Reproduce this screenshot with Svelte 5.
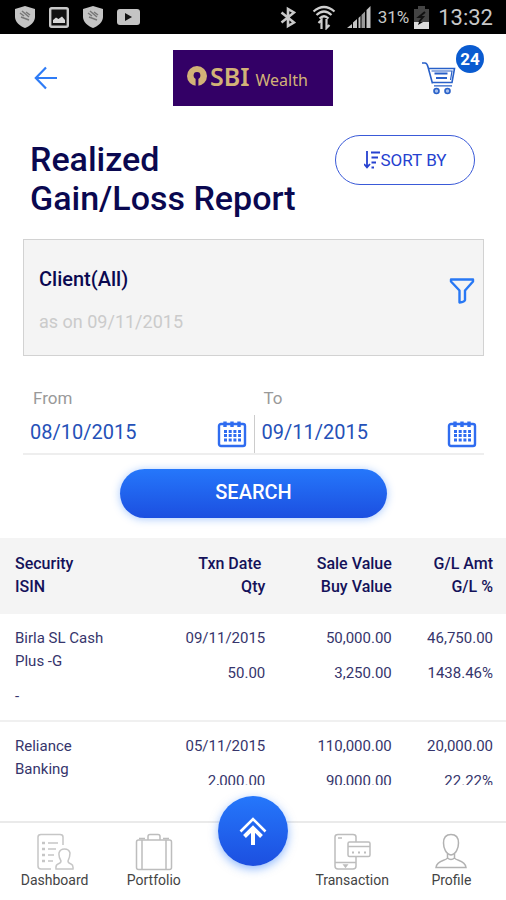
<script>
	let client = $state('Client(All)');
	let asOn = $state('09/11/2015');
	let fromDate = $state('08/10/2015');
	let toDate = $state('09/11/2015');
	let cartCount = $state(24);

	const rows = [
		{
			security: 'Birla SL Cash Plus -G',
			isin: '-',
			date: '09/11/2015',
			qty: '50.00',
			sale: '50,000.00',
			buy: '3,250.00',
			amount: '46,750.00',
			percent: '1438.46%'
		},
		{
			security: 'Reliance Banking',
			isin: '-',
			date: '05/11/2015',
			qty: '2,000.00',
			sale: '110,000.00',
			buy: '90,000.00',
			amount: '20,000.00',
			percent: '22.22%'
		}
	];
</script>

{#snippet shield()}
	<svg width="22" height="24" viewBox="0 0 22 24">
		<path d="M11 1 L21 4 V12 C21 17 16 21 11 23 C6 21 1 17 1 12 V4 Z" fill="#c4c4c4" />
		<path d="M6 8 L10 11 M8 6 L15 12 M12 7 L16 10 M7 12 L15 15" stroke="#777" stroke-width="1.5" fill="none" />
	</svg>
{/snippet}

{#snippet calendar()}
	<svg width="30" height="28" viewBox="0 0 30 28" fill="none" stroke="#2f6cf0">
		<rect x="2" y="4" width="26" height="22" rx="2" stroke-width="2.4" />
		<path d="M8 1.5 V7 M15 1.5 V7 M22 1.5 V7" stroke-width="3.4" />
		<path d="M7 11.5 H24 M7 15.5 H24 M7 20 H24" stroke-width="3" stroke-dasharray="3 1.7" />
	</svg>
{/snippet}

<div class="app">
	<div class="status">
		<div class="status-left">
			{@render shield()}
			<svg width="20" height="21" viewBox="0 0 20 21">
				<rect x="1.2" y="1.2" width="17.6" height="18.6" rx="1.5" fill="#111" stroke="#c8c8c8" stroke-width="2.4" />
				<path d="M4 16 V13 L7 10.5 L9.5 12 L13 9.5 L16 13 V16 Z" fill="#d8d8d8" />
			</svg>
			{@render shield()}
			<svg width="23" height="16" viewBox="0 0 23 16">
				<rect width="23" height="16" rx="3" fill="#c4c4c4" />
				<path d="M8 4 L15 8 L8 12 Z" fill="#111" />
			</svg>
		</div>
		<div class="status-right">
			<svg width="16" height="23" viewBox="0 0 16 23" fill="none" stroke="#c8c8c8" stroke-width="2.6">
				<path d="M1.5 6.5 L14 16.500 L8 20 V3 L14 6.500 L1.5 16.500" />
			</svg>
			<svg class="wifi" width="24" height="25" viewBox="0 0 24 25" fill="none" stroke="#cfcfcf" stroke-width="2.2">
				<path d="M1.5 6.5 Q12 -2.5 22.5 6.5" />
				<path d="M4.5 10 Q12 3 19.5 10" />
				<path d="M7.5 13.5 Q12 9 16.5 13.5" />
				<path d="M9.5 24 V15 L6.5 18 M14.5 14 V23 L17.5 20" />
			</svg>
			<svg class="signal" width="24" height="22" viewBox="0 0 24 22" fill="#c4c4c4">
				<path d="M0 22 L5 18 V22 Z M6 22 V16.5 L10 13 V22 Z M11.5 22 V12 L13.5 10 V22 Z" />
				<path d="M14.5 22 V9 L18 5.5 V22 Z" fill="#999" />
				<path d="M19.5 22 V4 L23.5 0 V22 Z" />
			</svg>
			<span class="battery">31%</span>
			<svg width="15" height="23" viewBox="0 0 15 23">
				<path d="M0 3 H4 V0 H11 V3 H15 V16 H0 Z" fill="#444" />
				<path d="M0 16 H5 L4 19 L9 16 H15 V23 H0 Z" fill="#ddd" />
				<path d="M11 6 L5 11 H9 L5 16" stroke="#111" stroke-width="2" fill="none" />
			</svg>
			<span class="clock">13:32</span>
		</div>
	</div>

	<header>
		<button class="icon-button back" aria-label="Back">
			<svg width="24" height="24" viewBox="0 0 24 24" fill="none" stroke="#2f7cf6" stroke-width="2.2">
				<path d="M23 12 H2 M12 1.5 L1.8 12 L12 22.5" />
			</svg>
		</button>
		<div class="logo">
			<svg width="20" height="22" viewBox="0 0 20 22">
				<circle cx="10" cy="11" r="10" fill="#d2b277" />
				<circle cx="10" cy="10.5" r="3.4" fill="#330066" />
				<rect x="8.6" y="11" width="2.8" height="11" fill="#330066" />
			</svg>
			<strong>SBI</strong>
			<span>Wealth</span>
		</div>
		<button class="icon-button cart" aria-label="Cart">
			<svg width="36" height="34" viewBox="0 0 36 34" fill="none" stroke="#2860c8" stroke-width="1.6">
				<path d="M1 2 H4 Q6 2 7 6 L11.5 22.5 M7 7.5 H33.5 L31 21.5 H11" />
				<path d="M10.5 10 H31 L29.5 19 M13 24.8 H31" stroke-width="1.2" />
				<path d="M13.5 12.5 H26.5 M15 17 H26" stroke-width="1.8" />
				<circle cx="15.5" cy="30" r="2.5" fill="#a8c0ec" />
				<circle cx="26.5" cy="30" r="2.5" fill="#a8c0ec" />
			</svg>
			<span class="badge">{cartCount}</span>
		</button>
	</header>

	<div class="title-row">
		<h1>Realized<br />Gain/Loss Report</h1>
		<button class="sort">
			<svg width="17" height="18" viewBox="0 0 17 18" fill="none" stroke="#2541d0" stroke-width="1.8">
				<path d="M3 0 V16 M0 13 L3 16.3 L6 13" />
				<path d="M7 1.5 H16 M7.5 6.5 H14 M7.5 11.5 H12 M7.5 16.5 H10" stroke-width="2" />
			</svg>SORT BY
		</button>
	</div>

	<section class="client">
		<div>
			<h2>{client}</h2>
			<p>as on {asOn}</p>
		</div>
		<button class="icon-button" aria-label="Filter">
			<svg width="26" height="28" viewBox="0 0 26 28" fill="none" stroke="#2878f4" stroke-width="2.4" stroke-linejoin="round">
				<path d="M2 2.5 H24 V4.5 L16 13.5 V23 Q15.5 25 10.5 25.5 V13.5 L2 4.5 Z" />
			</svg>
		</button>
	</section>

	<form onsubmit={(e) => e.preventDefault()}>
		<div class="dates">
			<div class="field">
				<label for="from">From</label>
				<div class="control">
					<input id="from" type="text" bind:value={fromDate} />
					<button type="button" class="icon-button" aria-label="Pick from date">{@render calendar()}</button>
				</div>
			</div>
			<div class="field">
				<label for="to">To</label>
				<div class="control">
					<input id="to" type="text" bind:value={toDate} />
					<button type="button" class="icon-button" aria-label="Pick to date">{@render calendar()}</button>
				</div>
			</div>
		</div>
		<button class="search">SEARCH</button>
	</form>

	<div class="list">
		<table>
			<thead>
				<tr>
					<th class="name">Security<br />ISIN</th>
					<th class="date">Txn Date&nbsp;<br />Qty</th>
					<th class="value">Sale Value<br />Buy Value</th>
					<th>G/L Amt<br />G/L %</th>
				</tr>
			</thead>
			<tbody>
				{#each rows as row}
					<tr>
						<td class="name"><div>{row.security}</div><div>{row.isin}</div></td>
						<td><div>{row.date}</div><div>{row.qty}</div></td>
						<td><div>{row.sale}</div><div>{row.buy}</div></td>
						<td><div>{row.amount}</div><div>{row.percent}</div></td>
					</tr>
				{/each}
			</tbody>
		</table>
	</div>

	<nav>
		<a href="#dashboard">
			<svg width="38" height="38" viewBox="0 0 38 38" fill="none" stroke="#c6c6c6" stroke-width="1.5">
				<path d="M15 36 H5 Q2 36 2 33 V4 Q2 1.5 5 1.5 H24 Q27 1.5 27 4 V12" />
				<path d="M12 10 H22 M12 16 H20 M12 22 H18 M12 28 H17" />
				<path d="M6 10 H9 M6 16 H9 M6 22 H9 M6 28 H9" stroke-width="2.4" />
				<path d="M25 28 Q22.5 24 23 20 Q24 16 28.5 16 Q33 16 34 20 Q34 24 32 28 Q32 30 35 31 Q37.500 32 37 36 H20 Q19.5 32 22 31 Q25 30 25 28 Z" />
			</svg>
			Dashboard
		</a>
		<a href="#portfolio">
			<svg width="38" height="38" viewBox="0 0 38 38" fill="none" stroke="#bdbdbd" stroke-width="1.5">
				<rect x="1.5" y="7" width="35" height="29.5" rx="2" />
				<path d="M7 7 V36 M31 7 V36 M4 5.5 H10 M28 5.5 H34" />
				<path d="M13 7 V3.5 Q13 1.5 15 1.5 H23 Q25 1.5 25 3.5 V7" />
			</svg>
			Portfolio
		</a>
		<div class="middle">
			<button class="fab" aria-label="Open menu">
				<svg width="28" height="30" viewBox="0 0 28 30" fill="none" stroke="#fff">
					<path d="M1.500 15.5 L14 3 L26.5 15.5" stroke-width="2.6" />
					<path d="M14 29 V13 M5.5 20.5 L14 12 L22.5 20.5" stroke-width="4" />
				</svg>
			</button>
		</div>
		<a href="#transaction">
			<svg width="38" height="38" viewBox="0 0 38 38" fill="none" stroke="#bdbdbd" stroke-width="1.5">
				<path d="M23 9 V4 Q23 1.5 20 1.5 H5 Q2 1.5 2 4 V33 Q2 36 5 36 H20 Q23 36 23 33 V24 M2 29.5 H23 M5 5 H9" />
				<path d="M11 32 H14 L12.5 34 Z" />
				<rect x="15" y="9" width="22" height="14.5" rx="1.5" fill="#fff" />
				<path d="M15 13.5 H37" />
				<path d="M19 19.5 H33" stroke-width="2" stroke-dasharray="2 4" />
			</svg>
			Transaction
		</a>
		<a href="#profile">
			<svg width="38" height="38" viewBox="0 0 38 38" fill="none" stroke="#b2b2b2" stroke-width="1.5">
				<path d="M19 1.5 C13.5 1.5 11.5 5.5 11.5 10 C11.5 15 14 21.5 19 22 C24 21.5 26.5 15 26.5 10 C26.5 5.5 24.5 1.5 19 1.5 Z" />
				<path d="M15.5 21 V25 C14 28 5 27 4 34.5 H34 C33 27 24 28 22.5 25 V21 M15.5 25 Q19 28 22.5 25" />
			</svg>
			Profile
		</a>
	</nav>
</div>

<style>
	:global(body) {
		margin: 0;
		background: #fff;
	}

	.app {
		display: flex;
		flex-direction: column;
		height: 100vh;
		font-family: Roboto, "Liberation Sans", sans-serif;
		color: #14125a;
	}

	button,
	input {
		font-family: inherit;
	}

	svg {
		display: block;
		flex: none;
	}

	.icon-button {
		padding: 0;
		border: none;
		background: none;
		cursor: pointer;
	}

	.status {
		display: flex;
		justify-content: space-between;
		align-items: center;
		height: 34px;
		flex: none;
		padding: 0 13px 0 14px;
		background: #000;
		color: #c8c8c8;
	}

	.status-left,
	.status-right {
		display: flex;
		align-items: center;
	}

	.status-left {
		gap: 13px;
	}

	.wifi {
		margin-left: 16px;
	}

	.signal {
		margin-left: 11px;
	}

	.battery {
		margin: 0 5px 0 7px;
		font-size: 17px;
	}

	.clock {
		margin-left: 9px;
		font-size: 22px;
	}

	header {
		display: grid;
		grid-template-columns: 1fr auto 1fr;
		align-items: center;
		padding: 16px 22px 0;
	}

	.back {
		justify-self: start;
		margin-left: 12px;
	}

	.logo {
		display: flex;
		align-items: center;
		box-sizing: border-box;
		width: 160px;
		height: 56px;
		padding: 0 14px;
		background: #330066;
		color: #d2b277;
	}

	.logo strong {
		margin: -4px 6px 0 3px;
		font: 600 25px/30px "Noto Sans", sans-serif;
	}

	.logo svg {
		margin-top: -4px;
	}

	.logo span {
		margin-top: 4px;
		font: 16px/24px "Noto Sans", sans-serif;
	}

	.cart {
		position: relative;
		justify-self: end;
		padding: 0 27px 0 0;
	}

	.badge {
		position: absolute;
		top: -16px;
		right: 0;
		width: 28px;
		border-radius: 14px;
		background: #0a5bd0;
		color: #fff;
		font-size: 17px;
		font-weight: 700;
		line-height: 28px;
		text-align: center;
	}

	.title-row {
		display: flex;
		justify-content: space-between;
		align-items: flex-start;
		padding: 29px 31px 0 30px;
	}

	h1 {
		margin: 5px 0 0;
		color: #0a0850;
		font-size: 34px;
		font-weight: 500;
		line-height: 39px;
	}

	.sort {
		display: flex;
		align-items: center;
		justify-content: center;
		width: 140px;
		height: 50px;
		flex: none;
		border: 1px solid #3a5ad8;
		border-radius: 25px;
		background: #fff;
		color: #2541d0;
		font-size: 17px;
	}

	.client {
		display: flex;
		justify-content: space-between;
		align-items: center;
		margin: 21px 22px 0 23px;
		padding: 28px 8px 22px 15px;
		border: 1px solid #d2d2d2;
		background: #f4f4f4;
	}

	.client h2 {
		margin: 0;
		color: #0a0850;
		font-size: 20px;
		font-weight: 500;
		line-height: 22px;
	}

	.client p {
		margin: 21px 0 0;
		color: #cbcbcb;
		font-size: 18px;
		line-height: 22px;
	}

	.client button {
		margin-bottom: 20px;
	}

	form {
		padding: 30px 22px 0 23px;
	}

	.dates {
		display: flex;
		border-bottom: 2px solid #eee;
	}

	.field {
		flex: 1;
		min-width: 0;
	}

	.field label {
		display: block;
		padding-left: 10px;
		color: #999;
		font-size: 17px;
		line-height: 24px;
	}

	.control {
		display: flex;
		align-items: center;
		height: 38px;
		margin-top: 5px;
		padding: 0 7px;
	}

	.field + .field .control {
		border-left: 1px solid #ccc;
	}

	.control input {
		flex: 1;
		min-width: 0;
		height: 34px;
		padding: 0 0 4px;
		box-sizing: border-box;
		border: none;
		outline: none;
		background: none;
		color: #2551b8;
		font-size: 20px;
	}

	.search {
		display: block;
		width: 58%;
		height: 49px;
		margin: 14px auto 0;
		padding: 0 0 4px;
		border: none;
		border-radius: 25px;
		background: linear-gradient(#2577fb, #1c4fe0);
		box-shadow: 0 1px 8px rgba(37, 119, 251, 0.4);
		color: #fff;
		font-size: 20px;
		font-weight: 500;
	}

	.list {
		flex: 1;
		min-height: 0;
		margin: 20px 0 36px;
		overflow-y: auto;
		scrollbar-width: none;
	}

	table {
		width: 100%;
		border-collapse: collapse;
		table-layout: fixed;
		line-height: 23px;
	}

	th,
	td {
		box-sizing: border-box;
	}

	th {
		padding: 14px 13px 16px 0;
		background: #f4f4f4;
		font-size: 16px;
		font-weight: 500;
		text-align: right;
	}

	td {
		padding: 13px 13px 12px 0;
		border-bottom: 2px solid #f0f0f0;
		color: #36356c;
		font-size: 15px;
		text-align: right;
		vertical-align: top;
	}

	td div + div {
		margin-top: 12px;
	}

	.name {
		width: 24%;
		padding-left: 15px;
		text-align: left;
	}

	.date {
		width: 31%;
	}

	.value {
		width: 25%;
	}

	nav {
		display: flex;
		flex: none;
		padding: 0 5px;
		height: 79px;
		border-top: 2px solid #eaeaea;
		box-sizing: border-box;
	}

	nav a,
	.middle {
		flex: 1;
	}

	nav a {
		display: flex;
		flex-direction: column;
		align-items: center;
		padding-top: 10px;
		color: #444;
		font-size: 14px;
		line-height: 18px;
		text-decoration: none;
	}

	.middle {
		position: relative;
	}

	.fab {
		position: absolute;
		top: -27px;
		left: 50%;
		display: flex;
		align-items: center;
		justify-content: center;
		width: 70px;
		height: 70px;
		margin-left: -35px;
		padding: 0;
		border: none;
		border-radius: 50%;
		background: linear-gradient(#2577fb, #1c4fe0);
		box-shadow: 0 3px 10px rgba(37, 119, 251, 0.5);
	}
</style>
